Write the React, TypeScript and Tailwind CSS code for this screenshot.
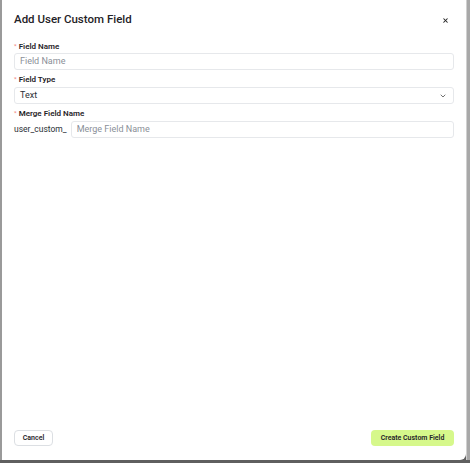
import { X, ChevronDown } from 'lucide-react';

function Label({ children }: { children: string }) {
  return (
    <p className="flex h-[10px] items-center gap-[2px] text-[8px] font-semibold leading-none text-[#1f2328]">
      <span className="mb-[2px] text-[6px] text-[#f28b82]">*</span>
      {children}
    </p>
  );
}

export default function App() {
  return (
    <div className="h-[463px] w-[470px] bg-[#5f5f5f] font-['Roboto',sans-serif]">
      <div className="flex h-[460px] w-[470px]">
        <div className="w-[2px] bg-[#9a9a9a]" />
        <div className="flex w-[464px] flex-col rounded-br-[6px] bg-white px-[12px] pt-[13px] pb-[14px]">
          <div className="flex h-[14px] items-center justify-between">
            <h2 className="text-[11.5px] font-medium leading-none text-[#1f2328]">Add User Custom Field</h2>
            <X size={7} strokeWidth={3.5} className="mr-[5px] text-[#222]" />
          </div>

          <div className="mt-[15px]">
            <Label>Field Name</Label>
            <div className="mt-[1px] flex h-[17px] items-center rounded-[3px] border border-[#e6e8eb] px-[5px] text-[9px] text-[#8a8f98]">
              Field Name
            </div>
          </div>

          <div className="mt-[5px]">
            <Label>Field Type</Label>
            <div className="mt-[2px] flex h-[17px] items-center justify-between rounded-[3px] border border-[#e6e8eb] pl-[5px] pr-[6px] text-[9px] text-[#2b2f36]">
              Text
              <ChevronDown size={8} strokeWidth={2.5} className="text-[#555]" />
            </div>
          </div>

          <div className="mt-[5px]">
            <Label>Merge Field Name</Label>
            <div className="mt-[2px] flex items-center gap-[4px]">
              <span className="text-[8.5px] text-[#2b2f36]">user_custom_</span>
              <div className="flex h-[17px] flex-1 items-center rounded-[3px] border border-[#e6e8eb] px-[5px] text-[9px] text-[#8a8f98]">
                Merge Field Name
              </div>
            </div>
          </div>

          <div className="mt-auto flex items-center justify-between">
            <button
              type="button"
              className="h-[16px] w-[39px] rounded-[4px] border border-[#dcdfe3] text-[7px] font-semibold leading-none text-[#1f2328]"
            >
              Cancel
            </button>
            <button
              type="button"
              className="h-[16px] w-[83px] rounded-[4px] bg-[#d6f88b] text-[7px] font-semibold leading-none text-[#1f2328]"
            >
              Create Custom Field
            </button>
          </div>
        </div>
        <div className="w-[1px] bg-[#d0d0d0]" />
        <div className="w-[3px] bg-[#a8a8a8]" />
      </div>
    </div>
  );
}
